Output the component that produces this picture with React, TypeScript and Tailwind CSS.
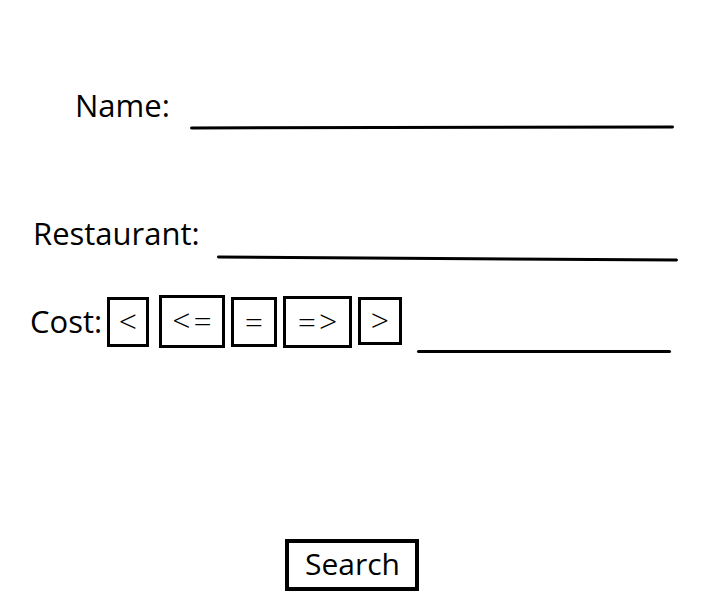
import React from 'react';

const ops = [
  { label: '<', w: 'w-[42px]', mt: 'mt-[2px]', h: 'h-[50px]' },
  { label: '<=', w: 'w-[66px]', mt: 'mt-0', h: 'h-[53px]' },
  { label: '=', w: 'w-[46px]', mt: 'mt-[2px]', h: 'h-[50px]' },
  { label: '=>', w: 'w-[69px]', mt: 'mt-[1px]', h: 'h-[52px]' },
  { label: '>', w: 'w-[44px]', mt: 'mt-[2px]', h: 'h-[48px]' },
];

export default function App() {
  return (
    <div className="w-full h-[599px] bg-white text-black font-['Open_Sans',sans-serif] overflow-hidden">
      {/* Name */}
      <div className="flex items-start pl-[75px] pt-[85px]">
        <span className="w-[115px] text-[31px] leading-[40px]">Name:</span>
        <div className="mt-[41px] w-[484px] h-[3px] bg-black rounded-full -rotate-[0.12deg]" />
      </div>

      {/* Restaurant */}
      <div className="flex items-start pl-[33px] mt-[84px]">
        <span className="w-[184px] text-[31px] leading-[40px]">Restaurant:</span>
        <div className="mt-[44px] w-[461px] h-[3px] bg-black rounded-full rotate-[0.37deg]" />
      </div>

      {/* Cost */}
      <div className="flex items-start pl-[30px] mt-[35px]">
        <span className="w-[77px] mt-[6px] text-[31px] leading-[40px]">Cost:</span>
        <div className="flex items-start gap-[6px]">
          {ops.map((o, i) => (
            <button
              key={o.label}
              className={`${o.w} ${o.h} ${o.mt} ${i === 1 ? 'ml-[4px]' : ''} border-[3.5px] border-black flex items-center justify-center text-[32px] font-light leading-none tracking-[3px] pl-[3px] pb-[3px]`}
            >
              {o.label}
            </button>
          ))}
        </div>
        <div className="ml-[15px] mt-[55px] w-[254px] h-[3px] bg-black rounded-full" />
      </div>

      {/* Search */}
      <div className="flex justify-center mt-[186px] pr-[7px]">
        <button className="w-[134px] h-[52px] border-4 border-black text-[30px] leading-none flex items-center justify-center pb-[3px] pl-[2px]">
          Search
        </button>
      </div>
    </div>
  );
}
